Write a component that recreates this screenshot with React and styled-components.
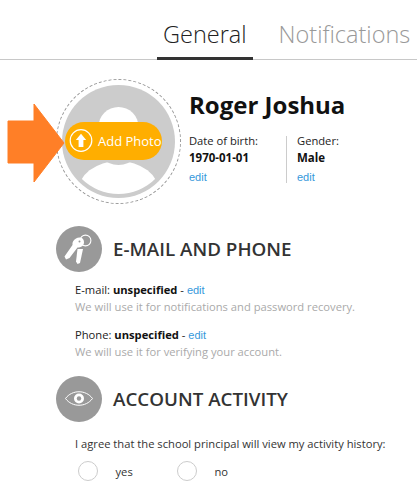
import styled, { createGlobalStyle } from "styled-components";
import { useState } from "react";

const GlobalStyle = createGlobalStyle`
  html, body {
    margin: 0;
    padding: 0;
    background: #fff;
    overflow: hidden;
  }
  body {
    font-family: "Open Sans", "Liberation Sans", sans-serif;
    color: #222;
  }
`;

const Page = styled.div`
  width: 417px;
  height: 504px;
  overflow: hidden;
`;

const Tabs = styled.nav`
  display: flex;
  height: 60px;
  box-sizing: border-box;
  padding-left: 157px;
  gap: 20px;
  border-bottom: 1px solid #c8c8c8;
  white-space: nowrap;
`;

const Tab = styled.a`
  height: 60px;
  box-sizing: border-box;
  padding: 18px 6px 0;
  font-size: 23.5px;
  line-height: 33px;
  font-weight: 300;
  cursor: pointer;
  color: ${(props) => (props.$active ? "#222" : "#999")};
  border-bottom: ${(props) => (props.$active ? "3px solid #333" : "none")};
`;

const Profile = styled.section`
  display: flex;
  padding: 19px 0 0 56px;
  height: 146px;
  box-sizing: border-box;
`;

const AvatarRing = styled.div`
  position: relative;
  width: 125px;
  height: 125px;
  flex-shrink: 0;
  box-sizing: border-box;
  border: 1px dashed #999;
  border-radius: 50%;
  display: flex;
  align-items: center;
  justify-content: center;
`;

const AvatarFace = styled.svg`
  display: block;
  width: 113px;
  height: 113px;
`;

const AddPhoto = styled.button`
  position: absolute;
  left: 8px;
  top: 42px;
  width: 97px;
  height: 38px;
  display: flex;
  align-items: center;
  gap: 3px;
  padding: 0 0 0 2px;
  box-sizing: border-box;
  border: none;
  border-radius: 19px;
  background: #ffae00;
  color: #fff;
  font: 400 13px "Open Sans", sans-serif;
  white-space: nowrap;

  svg {
    flex-shrink: 0;
  }
`;

const Arrow = styled.svg`
  position: absolute;
  left: -50px;
  top: 23px;
  width: 58px;
  height: 80px;
`;

const Details = styled.div`
  margin-left: 8px;
  padding-top: 9px;
`;

const Name = styled.h1`
  margin: 0;
  font-size: 24px;
  line-height: 33px;
  font-weight: 700;
  color: #111;
`;

const Facts = styled.div`
  display: flex;
  margin-top: 15px;
`;

const Fact = styled.div`
  width: ${(props) => props.$width}px;
  height: 47px;
  box-sizing: border-box;
  font-size: 11.2px;
  line-height: 17px;
  ${(props) => props.$divided && "border-left: 1px solid #ccc; padding-left: 10px;"}
`;

const FactLabel = styled.div`
  margin-top: -4px;
`;

const FactValue = styled.div`
  font-weight: 700;
  font-size: 11.5px;
  color: #111;
  margin-bottom: 2px;
`;

const EditLink = styled.a`
  font-family: "Liberation Sans", Arial, sans-serif;
  font-size: 11px;
  color: #3498db;
  cursor: pointer;
`;

const Section = styled.section`
  padding-left: 56px;
  margin-top: ${(props) => props.$top}px;
`;

const SectionHead = styled.div`
  display: flex;
  align-items: center;
  gap: 11px;
`;

const IconBadge = styled.div`
  width: 46px;
  height: 46px;
  border-radius: 50%;
  background: #999;
  display: flex;
  align-items: center;
  justify-content: center;
`;

const SectionTitle = styled.h2`
  margin: -1px 0 0;
  font-size: 18.8px;
  line-height: 26px;
  font-weight: 550;
  color: #333;
  white-space: nowrap;
`;

const SectionBody = styled.div`
  padding-left: 19px;
  margin-top: ${(props) => props.$top}px;
`;

const Field = styled.div`
  margin-bottom: 12px;
  font-size: 11.2px;
  line-height: 16px;
`;

const Line = styled.div`
  white-space: nowrap;
`;

const Strong = styled.b`
  font-weight: 700;
  font-size: 11.2px;
  color: #111;
`;

const Hint = styled.div`
  color: #aaa;
  white-space: nowrap;
  line-height: 17px;
`;

const Question = styled.div`
  font-size: 11.2px;
  line-height: 16px;
  color: #333;
  white-space: nowrap;
`;

const Choices = styled.div`
  display: flex;
  margin-top: 9px;
  padding-left: 3px;
`;

const Choice = styled.label`
  display: flex;
  align-items: center;
  width: 99px;
  font-size: 11.2px;
  color: #333;
`;

const RadioDot = styled.span`
  width: 20px;
  height: 20px;
  box-sizing: border-box;
  border: 1px solid #ccc;
  border-radius: 50%;
  margin-right: 17.5px;
  background: ${(props) => (props.$checked ? "#ffae00" : "#fff")};
`;

function UploadIcon() {
  return (
    <svg width="28" height="28" viewBox="0 0 28 28" aria-hidden="true">
      <circle cx="14" cy="13.5" r="10.8" fill="none" stroke="#fff" strokeWidth="1.2" />
      <path d="M14 6.8 L19.2 13 H16.4 V20 H11.6 V13 H8.8 Z" fill="#fff" />
    </svg>
  );
}

function KeysIcon() {
  return (
    <svg width="46" height="46" viewBox="0 0 46 46" aria-hidden="true">
      <circle cx="29.5" cy="14.5" r="5.4" fill="none" stroke="#fff" strokeWidth="1.1" />
      <path d="M27 23 L24 37 L21.5 38 L20 35.5 L21.5 23 Z" fill="#fff" />
      <path d="M20 12.5 C23 10.5 28 11.5 28 16 C28 20 25 21.5 21.5 21.5 L13.5 32 L10 33.5 L8.5 30.5 L16.5 19 C16 16 17.5 14 20 12.5 Z" fill="#fff" />
      <circle cx="23.5" cy="15.5" r="1" fill="#999" />
    </svg>
  );
}

function EyeIcon() {
  return (
    <svg width="46" height="46" viewBox="0 0 46 46" aria-hidden="true">
      <path d="M9.5 22.5 C16 13.5 30 13.5 36.5 22.5 C30 31.5 16 31.5 9.5 22.5 Z" fill="none" stroke="#fff" strokeWidth="1" />
      <circle cx="23" cy="22.5" r="5" fill="#fff" />
      <circle cx="23" cy="22.5" r="2.2" fill="#999" />
    </svg>
  );
}

function App() {
  const [tab, setTab] = useState("General");
  const [agree, setAgree] = useState(null);

  return (
    <Page>
      <GlobalStyle />
      <Tabs>
        {["General", "Notifications"].map((name) => (
          <Tab key={name} $active={tab === name} onClick={() => setTab(name)}>
            {name}
          </Tab>
        ))}
      </Tabs>

      <Profile>
        <AvatarRing>
          <AvatarFace viewBox="0 0 113 113" aria-hidden="true">
            <defs>
              <clipPath id="face">
                <circle cx="56.5" cy="56.5" r="52.5" />
              </clipPath>
            </defs>
            <circle cx="56.5" cy="56.5" r="56.5" fill="#ccc" />
            <g clipPath="url(#face)">
              <ellipse cx="56.5" cy="108" rx="41" ry="32" fill="#fff" />
            </g>
            <circle cx="56.5" cy="55" r="25" fill="#ccc" />
            <circle cx="56.5" cy="42" r="20" fill="#fff" />
          </AvatarFace>
          <AddPhoto>
            <UploadIcon />
            Add Photo
          </AddPhoto>
          <Arrow viewBox="0 0 58 80" aria-hidden="true">
            <path d="M1 18 H27 V1 L57 40 L27 79 V60 H1 Z" fill="#ff7f27" stroke="#ff7f27" strokeWidth="1" strokeLinejoin="round" />
          </Arrow>
        </AvatarRing>

        <Details>
          <Name>Roger Joshua</Name>
          <Facts>
            <Fact $width={97}>
              <FactLabel>Date of birth:</FactLabel>
              <FactValue>1970-01-01</FactValue>
              <EditLink>edit</EditLink>
            </Fact>
            <Fact $width={90} $divided>
              <FactLabel>Gender:</FactLabel>
              <FactValue>Male</FactValue>
              <EditLink>edit</EditLink>
            </Fact>
          </Facts>
        </Details>
      </Profile>

      <Section $top={20}>
        <SectionHead>
          <IconBadge>
            <KeysIcon />
          </IconBadge>
          <SectionTitle>E-MAIL AND PHONE</SectionTitle>
        </SectionHead>
        <SectionBody $top={10}>
          <Field>
            <Line>
              E-mail: <Strong>unspecified</Strong> - <EditLink>edit</EditLink>
            </Line>
            <Hint>We will use it for notifications and password recovery.</Hint>
          </Field>
          <Field>
            <Line>
              Phone: <Strong>unspecified</Strong> - <EditLink>edit</EditLink>
            </Line>
            <Hint>We will use it for verifying your account.</Hint>
          </Field>
        </SectionBody>
      </Section>

      <Section $top={16}>
        <SectionHead>
          <IconBadge>
            <EyeIcon />
          </IconBadge>
          <SectionTitle>ACCOUNT ACTIVITY</SectionTitle>
        </SectionHead>
        <SectionBody $top={14}>
          <Question>I agree that the school principal will view my activity history:</Question>
          <Choices>
            {["yes", "no"].map((option) => (
              <Choice key={option} onClick={() => setAgree(option)}>
                <RadioDot $checked={agree === option} />
                {option}
              </Choice>
            ))}
          </Choices>
        </SectionBody>
      </Section>
    </Page>
  );
}

export default App;
